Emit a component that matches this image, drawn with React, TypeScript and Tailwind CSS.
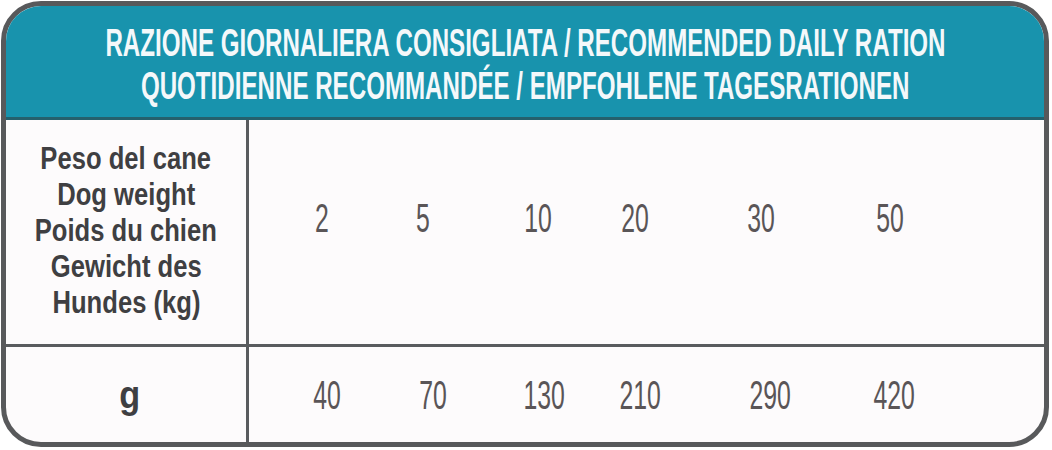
const weights = [
  { value: "2", box: "ml-[43px]" },
  { value: "5", box: "ml-[41px]" },
  { value: "10", box: "ml-[55px]" },
  { value: "20", box: "ml-[37px]" },
  { value: "30", box: "ml-[66px]" },
  { value: "50", box: "ml-[69px]" },
]

const grams = [
  { value: "40", box: "ml-[48px]" },
  { value: "70", box: "ml-[46px]" },
  { value: "130", box: "ml-[49px]" },
  { value: "210", box: "ml-[36px]" },
  { value: "290", box: "ml-[70px]" },
  { value: "420", box: "ml-[64px]" },
]

const labelLines = [
  "Peso del cane",
  "Dog weight",
  "Poids du chien",
  "Gewicht des",
  "Hundes (kg)",
]

function Cells({ items }: { items: { value: string; box: string }[] }) {
  return (
    <div className="flex items-center">
      {items.map((item) => (
        <span
          key={item.value}
          className={`${item.box} w-[60px] scale-x-[0.62] text-center text-[40px] leading-none text-[#5a5557]`}
        >
          {item.value}
        </span>
      ))}
    </div>
  )
}

export default function App() {
  return (
    <div className="h-[450px] w-[1052px] bg-white pl-[1px] pt-[1px] font-['Liberation_Sans',Arial,sans-serif]">
      <div className="flex h-[446px] w-[1048px] flex-col overflow-hidden rounded-[40px] border-[5px] border-[#58595b] bg-[#fdfbfc]">
        <div className="flex h-[114px] shrink-0 flex-col items-center justify-center border-b-[3px] border-[#25606c] bg-[#1893ad] pt-[6px] text-[38px] font-bold leading-[43px] text-[#f4f8fa]">
          <div className="scale-x-[0.635] whitespace-nowrap">
            RAZIONE GIORNALIERA CONSIGLIATA / RECOMMENDED DAILY RATION
          </div>
          <div className="scale-x-[0.635] whitespace-nowrap">
            QUOTIDIENNE RECOMMANDÉE / EMPFOHLENE TAGESRATIONEN
          </div>
        </div>

        <div className="flex h-[227px] shrink-0 border-b-[3px] border-[#595b5e]">
          <div className="flex w-[243px] shrink-0 flex-col items-center justify-center border-r-[3px] border-[#595b5e] pb-[4px] text-[32px] font-bold leading-[36px] text-[#3f3f42]">
            {labelLines.map((line) => (
              <div key={line} className="scale-x-[0.8] whitespace-nowrap">
                {line}
              </div>
            ))}
          </div>
          <div className="flex items-center pb-[28px]">
            <Cells items={weights} />
          </div>
        </div>

        <div className="flex flex-1">
          <div className="flex w-[243px] shrink-0 items-center justify-center border-r-[3px] border-[#595b5e] pl-[8px]">
            <span className="scale-x-[0.9] text-[38px] font-bold leading-none text-[#3f3f42]">
              g
            </span>
          </div>
          <div className="flex items-center">
            <Cells items={grams} />
          </div>
        </div>
      </div>
    </div>
  )
}
